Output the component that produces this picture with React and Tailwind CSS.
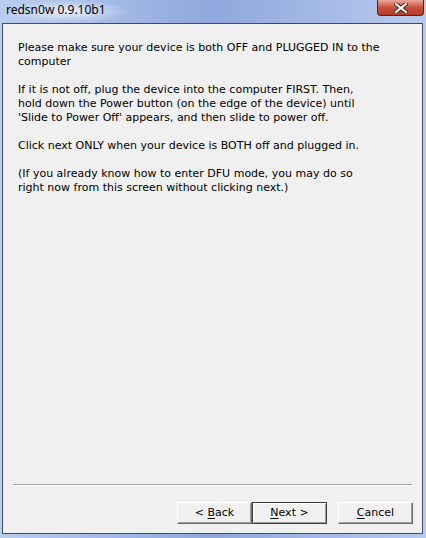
import React from "react";

function WizButton({ label, mnemonic, rest, prefix, isDefault }) {
  return (
    <button
      className={
        "w-[75px] h-[22px] flex items-center justify-center text-[11px] text-black whitespace-pre " +
        (isDefault
          ? "border border-[#3c3c3c] shadow-[inset_1px_1px_0_#ffffff,inset_-1px_-1px_0_#a0a0a0]"
          : "border border-t-white border-l-white border-r-[#696969] border-b-[#696969] shadow-[inset_-1px_-1px_0_#a0a0a0]") +
        " bg-[#f0f0f0]"
      }
      style={{ fontFamily: "'DejaVu Sans', sans-serif" }}
    >
      <span>
        {prefix}
        <span className="underline underline-offset-2">{mnemonic}</span>
        {rest}
      </span>
    </button>
  );
}

export default function App() {
  return (
    <div className="w-[426px] h-[538px] flex flex-col bg-gradient-to-r from-[#b9cdef] via-[#8fa8dd] to-[#b8caed] px-[2px] pr-[3px] pb-[4px]">
      <div className="h-[23px] relative flex items-center">
        <div className="absolute left-0 top-0 w-[130px] h-[23px] bg-[radial-gradient(ellipse_at_center,rgba(255,255,255,0.75),rgba(255,255,255,0)_70%)]" />
        <span
          className="relative pl-[4px] pb-[3px] text-[12px] text-black"
          style={{ fontFamily: "'Noto Sans', sans-serif" }}
        >
          redsn0w 0.9.10b1
        </span>
        <div className="absolute right-[-1px] top-0 w-[47px] h-[16px] rounded-b-[4px] border border-t-0 border-[#5a2018] bg-gradient-to-b from-[#e9a89a] via-[#c9503b] to-[#b73a24] flex items-center justify-center">
          <svg width="14" height="10" viewBox="0 0 14 10">
            <path d="M2 1 L12 9 M12 1 L2 9" stroke="#3a1a14" strokeWidth="4" strokeLinecap="square" />
            <path d="M2 1 L12 9 M12 1 L2 9" stroke="#ffffff" strokeWidth="2.2" strokeLinecap="square" />
          </svg>
        </div>
      </div>
      <div className="flex-1 border border-[#3f4b5e] bg-[#f0f0f0] flex flex-col">
        <div
          className="flex-1 pl-[15px] pt-[17px] text-[11px] leading-[14px] text-black"
          style={{ fontFamily: "'DejaVu Sans', sans-serif" }}
        >
          <p>
            Please make sure your device is both OFF and PLUGGED IN to the
            <br />
            computer
          </p>
          <p className="mt-[14px]">
            If it is not off, plug the device into the computer FIRST. Then,
            <br />
            hold down the Power button (on the edge of the device) until
            <br />
            'Slide to Power Off' appears, and then slide to power off.
          </p>
          <p className="mt-[14px]">Click next ONLY when your device is BOTH off and plugged in.</p>
          <p className="mt-[14px]">
            (If you already know how to enter DFU mode, you may do so
            <br />
            right now from this screen without clicking next.)
          </p>
        </div>
        <div className="mx-[10px] h-[2px] border-t border-[#a0a0a0] border-b border-b-white" />
        <div className="flex justify-end items-center pt-[16px] pb-[9px] pr-[9px]">
          <WizButton prefix="< " mnemonic="B" rest="ack" />
          <WizButton mnemonic="N" rest="ext >" isDefault />
          <div className="w-[11px]" />
          <WizButton mnemonic="C" rest="ancel" />
        </div>
      </div>
    </div>
  );
}
